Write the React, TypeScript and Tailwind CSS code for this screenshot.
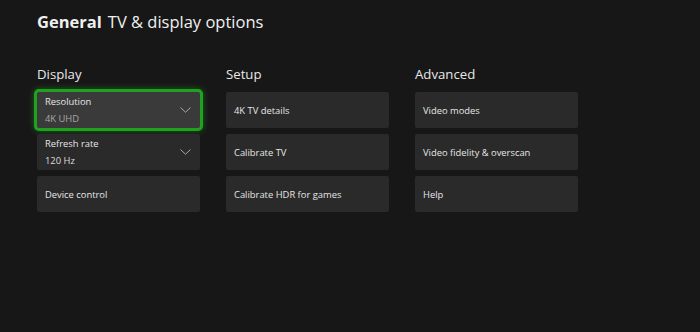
import React from 'react';

type Item = {
  label: string;
  value?: string;
  dropdown?: boolean;
  focused?: boolean;
};

const columns: { title: string; items: Item[] }[] = [
  {
    title: 'Display',
    items: [
      { label: 'Resolution', value: '4K UHD', dropdown: true, focused: true },
      { label: 'Refresh rate', value: '120 Hz', dropdown: true },
      { label: 'Device control' },
    ],
  },
  {
    title: 'Setup',
    items: [
      { label: '4K TV details' },
      { label: 'Calibrate TV' },
      { label: 'Calibrate HDR for games' },
    ],
  },
  {
    title: 'Advanced',
    items: [
      { label: 'Video modes' },
      { label: 'Video fidelity & overscan' },
      { label: 'Help' },
    ],
  },
];

function Chevron() {
  return (
    <svg width="11" height="6" viewBox="0 0 11 6" fill="none" className="shrink-0">
      <path d="M0.5 0.5 L5.5 5.2 L10.5 0.5" stroke="#a8a8a8" strokeWidth="1" />
    </svg>
  );
}

function SettingCard({ item }: { item: Item }) {
  const base = 'flex h-[36px] items-center justify-between rounded-[2px] pl-[8px] pr-[9px]';
  const look = item.focused
    ? 'bg-[#3a3a3a] shadow-[0_0_0_3px_#1fa31f,0_0_6px_3px_rgba(40,190,40,0.45)]'
    : 'bg-[#2a2a2a]';

  return (
    <div className={`${base} ${look}`}>
      {item.value ? (
        <div className="flex flex-col">
          <span className="text-[9.4px] leading-[15px] text-[#e6e6e6]">{item.label}</span>
          <span
            className={`mt-[2px] text-[9.4px] leading-[15px] ${
              item.focused ? 'text-[#a9a9a9]' : 'text-[#dedede]'
            }`}
          >
            {item.value}
          </span>
        </div>
      ) : (
        <span className="text-[9.4px] leading-[15px] text-[#e6e6e6]">{item.label}</span>
      )}
      {item.dropdown && <Chevron />}
    </div>
  );
}

export default function App() {
  return (
    <div
      className="h-[332px] w-[700px] overflow-hidden bg-[#171717] pl-[37px] pt-[10px]"
      style={{ fontFamily: '"Open Sans", "Noto Sans", sans-serif' }}
    >
      {/* Header */}
      <div className="flex items-baseline gap-[6px] text-[#f0f0f0]">
        <span className="text-[16.5px] font-bold leading-[24px]">General</span>
        <span className="text-[16.5px] leading-[24px]">TV &amp; display options</span>
      </div>

      {/* Columns */}
      <div className="mt-[31px] flex gap-[26px]">
        {columns.map((col) => (
          <div key={col.title} className="w-[163px]">
            <h2 className="text-[13.2px] leading-[18px] text-[#e8e8e8]">{col.title}</h2>
            <div className="mt-[9px] flex flex-col gap-[6px]">
              {col.items.map((item) => (
                <SettingCard key={item.label} item={item} />
              ))}
            </div>
          </div>
        ))}
      </div>
    </div>
  );
}
